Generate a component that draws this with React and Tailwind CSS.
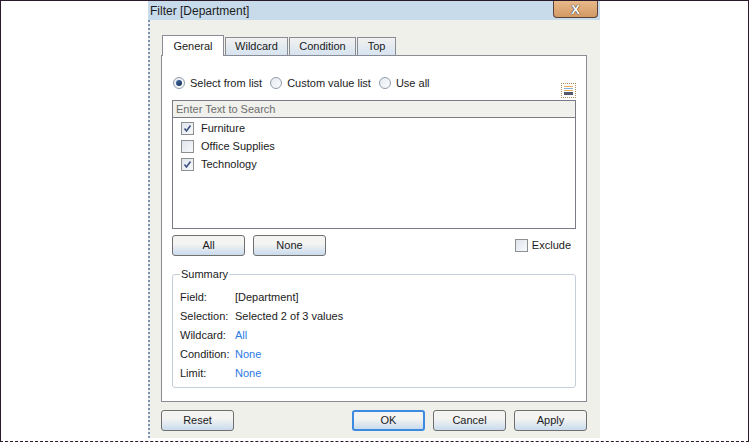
import React from "react";

const font = { fontFamily: '"Liberation Sans", Arial, sans-serif' };

function Radio({ checked, label }) {
    return (
        <div className="flex items-center gap-[5px]">
            <div className="w-[12px] h-[12px] rounded-full border border-[#8f9bab] bg-gradient-to-br from-[#e6ebf0] to-[#fbfcfd] flex items-center justify-center">
                {checked && <div className="w-[6px] h-[6px] rounded-full bg-gradient-to-br from-[#4b6fa5] to-[#102a57]" />}
            </div>
            <span>{label}</span>
        </div>
    );
}

function Check({ checked }) {
    return (
        <div className="w-[13px] h-[13px] border border-[#8e8f8f] bg-gradient-to-br from-[#dfe6ee] to-[#f8f9fb] flex items-center justify-center">
            {checked && (
                <svg width="9" height="9" viewBox="0 0 9 9">
                    <path d="M1.5 4.5 L3.5 7 L7.5 1.5" fill="none" stroke="#3f5283" strokeWidth="1.6" />
                </svg>
            )}
        </div>
    );
}

function Button({ children, focused }) {
    return (
        <div
            className={`w-[73px] h-[21px] rounded-[3px] flex items-center justify-center bg-gradient-to-b from-[#f4f4f2] from-40% to-[#c9dbec] ${focused ? 'border-2 border-[#3c8be0]' : 'border border-[#707070]'}`}
        >
            {children}
        </div>
    );
}

function Tab({ label, width, selected }) {
    return (
        <div
            className={`flex items-center justify-center border border-b-0 border-[#898c95] ${selected ? 'h-[21px] bg-white relative z-10 -mb-px' : 'h-[18px] bg-gradient-to-b from-[#f2f2f0] to-[#d6e3f0]'}`}
            style={{ width }}
        >
            {label}
        </div>
    );
}

const summary = [
    ['Field:', '[Department]', false],
    ['Selection:', 'Selected 2 of 3 values', false],
    ['Wildcard:', 'All', true],
    ['Condition:', 'None', true],
    ['Limit:', 'None', true],
];

export default function App() {
    return (
        <div
            className="w-[749px] h-[442px] bg-white border border-[#2b1a2b] [border-bottom-style:dashed] flex text-[11px] leading-[13px] text-[#1b1b1b] overflow-hidden"
            style={font}
        >
            <div className="w-[147px] shrink-0" />
            <div className="w-[452px] shrink-0 flex flex-col h-[437px]">
                <div className="h-[19px] bg-[#c8dbeb] flex items-start justify-between pl-[2px] pr-[2px]">
                    <span className="text-[12px] leading-[18px] text-[#1b1b1b] mt-[1px]">Filter [Department]</span>
                    <div className="w-[45px] h-[17px] rounded-b-[4px] border border-t-0 border-[#5b4236] bg-gradient-to-b from-[#e9b98a] to-[#d29a64] flex items-center justify-center">
                        <span className="text-[13px] font-bold text-white leading-none [text-shadow:0_0_1px_#222,0_0_1px_#222]">X</span>
                    </div>
                </div>
                <div className="flex-1 bg-[#f0f0eb] border-l-2 border-dotted border-[#7d92b2] pl-[11px] pr-[13px] pt-[14px] flex flex-col">
                    <div className="flex items-end gap-[1px] pl-[1px] h-[21px]">
                        <Tab label="General" width={62} selected />
                        <Tab label="Wildcard" width={63} />
                        <Tab label="Condition" width={67} />
                        <Tab label="Top" width={39} />
                    </div>
                    <div className="h-[347px] bg-white border border-[#898c95] px-[10px] pt-[19px] flex flex-col">
                        <div className="flex items-start justify-between h-[23px]">
                            <div className="flex items-center gap-[8px] h-[16px] pl-[1px]">
                                <Radio checked label="Select from list" />
                                <Radio label="Custom value list" />
                                <Radio label="Use all" />
                            </div>
                            <div className="mt-[8px] w-[15px] h-[15px] border border-dotted border-[#b08a55] flex items-center justify-center">
                                <svg width="9" height="9" viewBox="0 0 9 9">
                                    <rect x="0" y="0" width="9" height="1" fill="#f0b060" />
                                    <rect x="0" y="2" width="9" height="1" fill="#8ab4e0" />
                                    <rect x="0" y="4" width="9" height="1" fill="#f0b060" />
                                    <rect x="0" y="6" width="9" height="3" fill="#505a6c" />
                                </svg>
                            </div>
                        </div>
                        <div className="mt-[2px] h-[129px] border border-[#7a7b87] flex flex-col">
                            <div className="h-[17px] bg-[#f0f0ec] border-b border-[#7a7b87] flex items-center pl-[3px] text-[#6d6d6d]">
                                Enter Text to Search
                            </div>
                            <div className="pt-[1px] flex flex-col">
                                {[['Furniture', true], ['Office Supplies', false], ['Technology', true]].map(([name, on]) => (
                                    <div key={name} className="h-[18px] flex items-center pl-[8px] gap-[7px]">
                                        <Check checked={on} />
                                        <span>{name}</span>
                                    </div>
                                ))}
                            </div>
                        </div>
                        <div className="mt-[6px] flex items-center">
                            <Button>All</Button>
                            <div className="ml-[8px]"><Button>None</Button></div>
                            <div className="ml-auto flex items-center gap-[4px] pr-[5px]">
                                <Check />
                                <span>Exclude</span>
                            </div>
                        </div>
                        <fieldset className="mt-[12px] border border-[#c5cfdb] rounded-[3px] px-[7px] pb-[4px]">
                            <legend className="px-[1px] leading-[13px]">Summary</legend>
                            <div className="pt-[7px] flex flex-col">
                                {summary.map(([label, value, link]) => (
                                    <div key={label} className="h-[19px] flex items-center">
                                        <span className="w-[55px] shrink-0">{label}</span>
                                        <span className={link ? 'text-[#2a7ae2]' : ''}>{value}</span>
                                    </div>
                                ))}
                            </div>
                        </fieldset>
                    </div>
                    <div className="mt-[8px] flex items-center">
                        <Button>Reset</Button>
                        <div className="ml-auto flex gap-[8px]">
                            <Button focused>OK</Button>
                            <Button>Cancel</Button>
                            <Button>Apply</Button>
                        </div>
                    </div>
                </div>
            </div>
            <div className="flex-1" />
        </div>
    );
}
